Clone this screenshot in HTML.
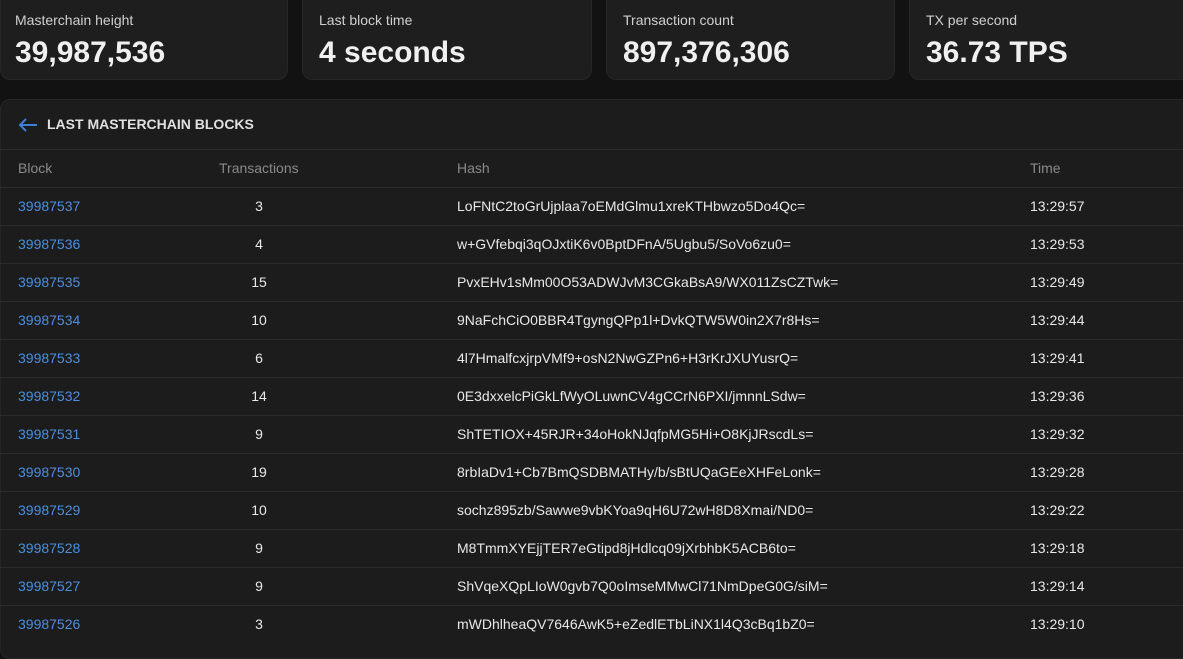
<!DOCTYPE html>
<html><head><style>
body{margin:0;width:1183px;height:647px;background:#121212;font-family:"Liberation Sans",sans-serif;overflow:hidden;position:relative;color:#e8e8e8}
.card{position:absolute;top:-10px;height:90px;background:#1e1e1e;border-radius:10px;border:1px solid #262626;box-sizing:border-box}
.card .l{position:absolute;left:14px;top:21px;font-size:14px;color:#d0d0d0}
.card .v{position:absolute;left:14px;top:45px;font-size:30px;font-weight:bold;color:#f0f0f0}
.panel{position:absolute;left:0;top:99px;width:1200px;height:560px;background:#1c1c1c;border-radius:10px;border:1px solid #262626;box-sizing:border-box}
.hd{position:absolute;left:47px;top:116px;font-size:14px;font-weight:bold;color:#e0e0e0}
.row{position:absolute;left:0;width:1183px;height:38px;border-top:1px solid #2b2b2b;font-size:14px}
.row span{position:absolute;top:10px}
.b{left:18px;color:#4a8fe0}
.t{left:230px;width:58px;text-align:center}
.h{left:457px}
.tm{left:1030px}
.ch span{color:#8a8a8a}
</style></head><body>
<div class="card" style="left:0;width:288px"><div class="l">Masterchain height</div><div class="v">39,987,536</div></div>
<div class="card" style="left:302px;width:290px"><div class="l" style="left:16px">Last block time</div><div class="v" style="left:16px">4 seconds</div></div>
<div class="card" style="left:606px;width:289px"><div class="l" style="left:16px">Transaction count</div><div class="v" style="left:16px">897,376,306</div></div>
<div class="card" style="left:909px;width:290px"><div class="l" style="left:16px">TX per second</div><div class="v" style="left:16px">36.73 TPS</div></div>
<div class="panel"></div>
<svg style="position:absolute;left:17px;top:117px" width="22" height="16" viewBox="0 0 22 16"><path d="M20 8H3M9 2L3 8l6 6" stroke="#3d7fd6" stroke-width="2" fill="none"/></svg>
<div class="hd">LAST MASTERCHAIN BLOCKS</div>
<div class="row ch" style="top:149px"><span style="left:18px">Block</span><span style="left:219px">Transactions</span><span style="left:457px">Hash</span><span style="left:1030px">Time</span></div>
<div class="row" style="top:187px"><span class="b">39987537</span><span class="t">3</span><span class="h">LoFNtC2toGrUjplaa7oEMdGlmu1xreKTHbwzo5Do4Qc=</span><span class="tm">13:29:57</span></div>
<div class="row" style="top:225px"><span class="b">39987536</span><span class="t">4</span><span class="h">w+GVfebqi3qOJxtiK6v0BptDFnA/5Ugbu5/SoVo6zu0=</span><span class="tm">13:29:53</span></div>
<div class="row" style="top:263px"><span class="b">39987535</span><span class="t">15</span><span class="h">PvxEHv1sMm00O53ADWJvM3CGkaBsA9/WX011ZsCZTwk=</span><span class="tm">13:29:49</span></div>
<div class="row" style="top:301px"><span class="b">39987534</span><span class="t">10</span><span class="h">9NaFchCiO0BBR4TgyngQPp1l+DvkQTW5W0in2X7r8Hs=</span><span class="tm">13:29:44</span></div>
<div class="row" style="top:339px"><span class="b">39987533</span><span class="t">6</span><span class="h">4l7HmalfcxjrpVMf9+osN2NwGZPn6+H3rKrJXUYusrQ=</span><span class="tm">13:29:41</span></div>
<div class="row" style="top:377px"><span class="b">39987532</span><span class="t">14</span><span class="h">0E3dxxelcPiGkLfWyOLuwnCV4gCCrN6PXI/jmnnLSdw=</span><span class="tm">13:29:36</span></div>
<div class="row" style="top:415px"><span class="b">39987531</span><span class="t">9</span><span class="h">ShTETIOX+45RJR+34oHokNJqfpMG5Hi+O8KjJRscdLs=</span><span class="tm">13:29:32</span></div>
<div class="row" style="top:453px"><span class="b">39987530</span><span class="t">19</span><span class="h">8rbIaDv1+Cb7BmQSDBMATHy/b/sBtUQaGEeXHFeLonk=</span><span class="tm">13:29:28</span></div>
<div class="row" style="top:491px"><span class="b">39987529</span><span class="t">10</span><span class="h">sochz895zb/Sawwe9vbKYoa9qH6U72wH8D8Xmai/ND0=</span><span class="tm">13:29:22</span></div>
<div class="row" style="top:529px"><span class="b">39987528</span><span class="t">9</span><span class="h">M8TmmXYEjjTER7eGtipd8jHdlcq09jXrbhbK5ACB6to=</span><span class="tm">13:29:18</span></div>
<div class="row" style="top:567px"><span class="b">39987527</span><span class="t">9</span><span class="h">ShVqeXQpLIoW0gvb7Q0oImseMMwCl71NmDpeG0G/siM=</span><span class="tm">13:29:14</span></div>
<div class="row" style="top:605px"><span class="b">39987526</span><span class="t">3</span><span class="h">mWDhlheaQV7646AwK5+eZedlETbLiNX1l4Q3cBq1bZ0=</span><span class="tm">13:29:10</span></div>
</body></html>
